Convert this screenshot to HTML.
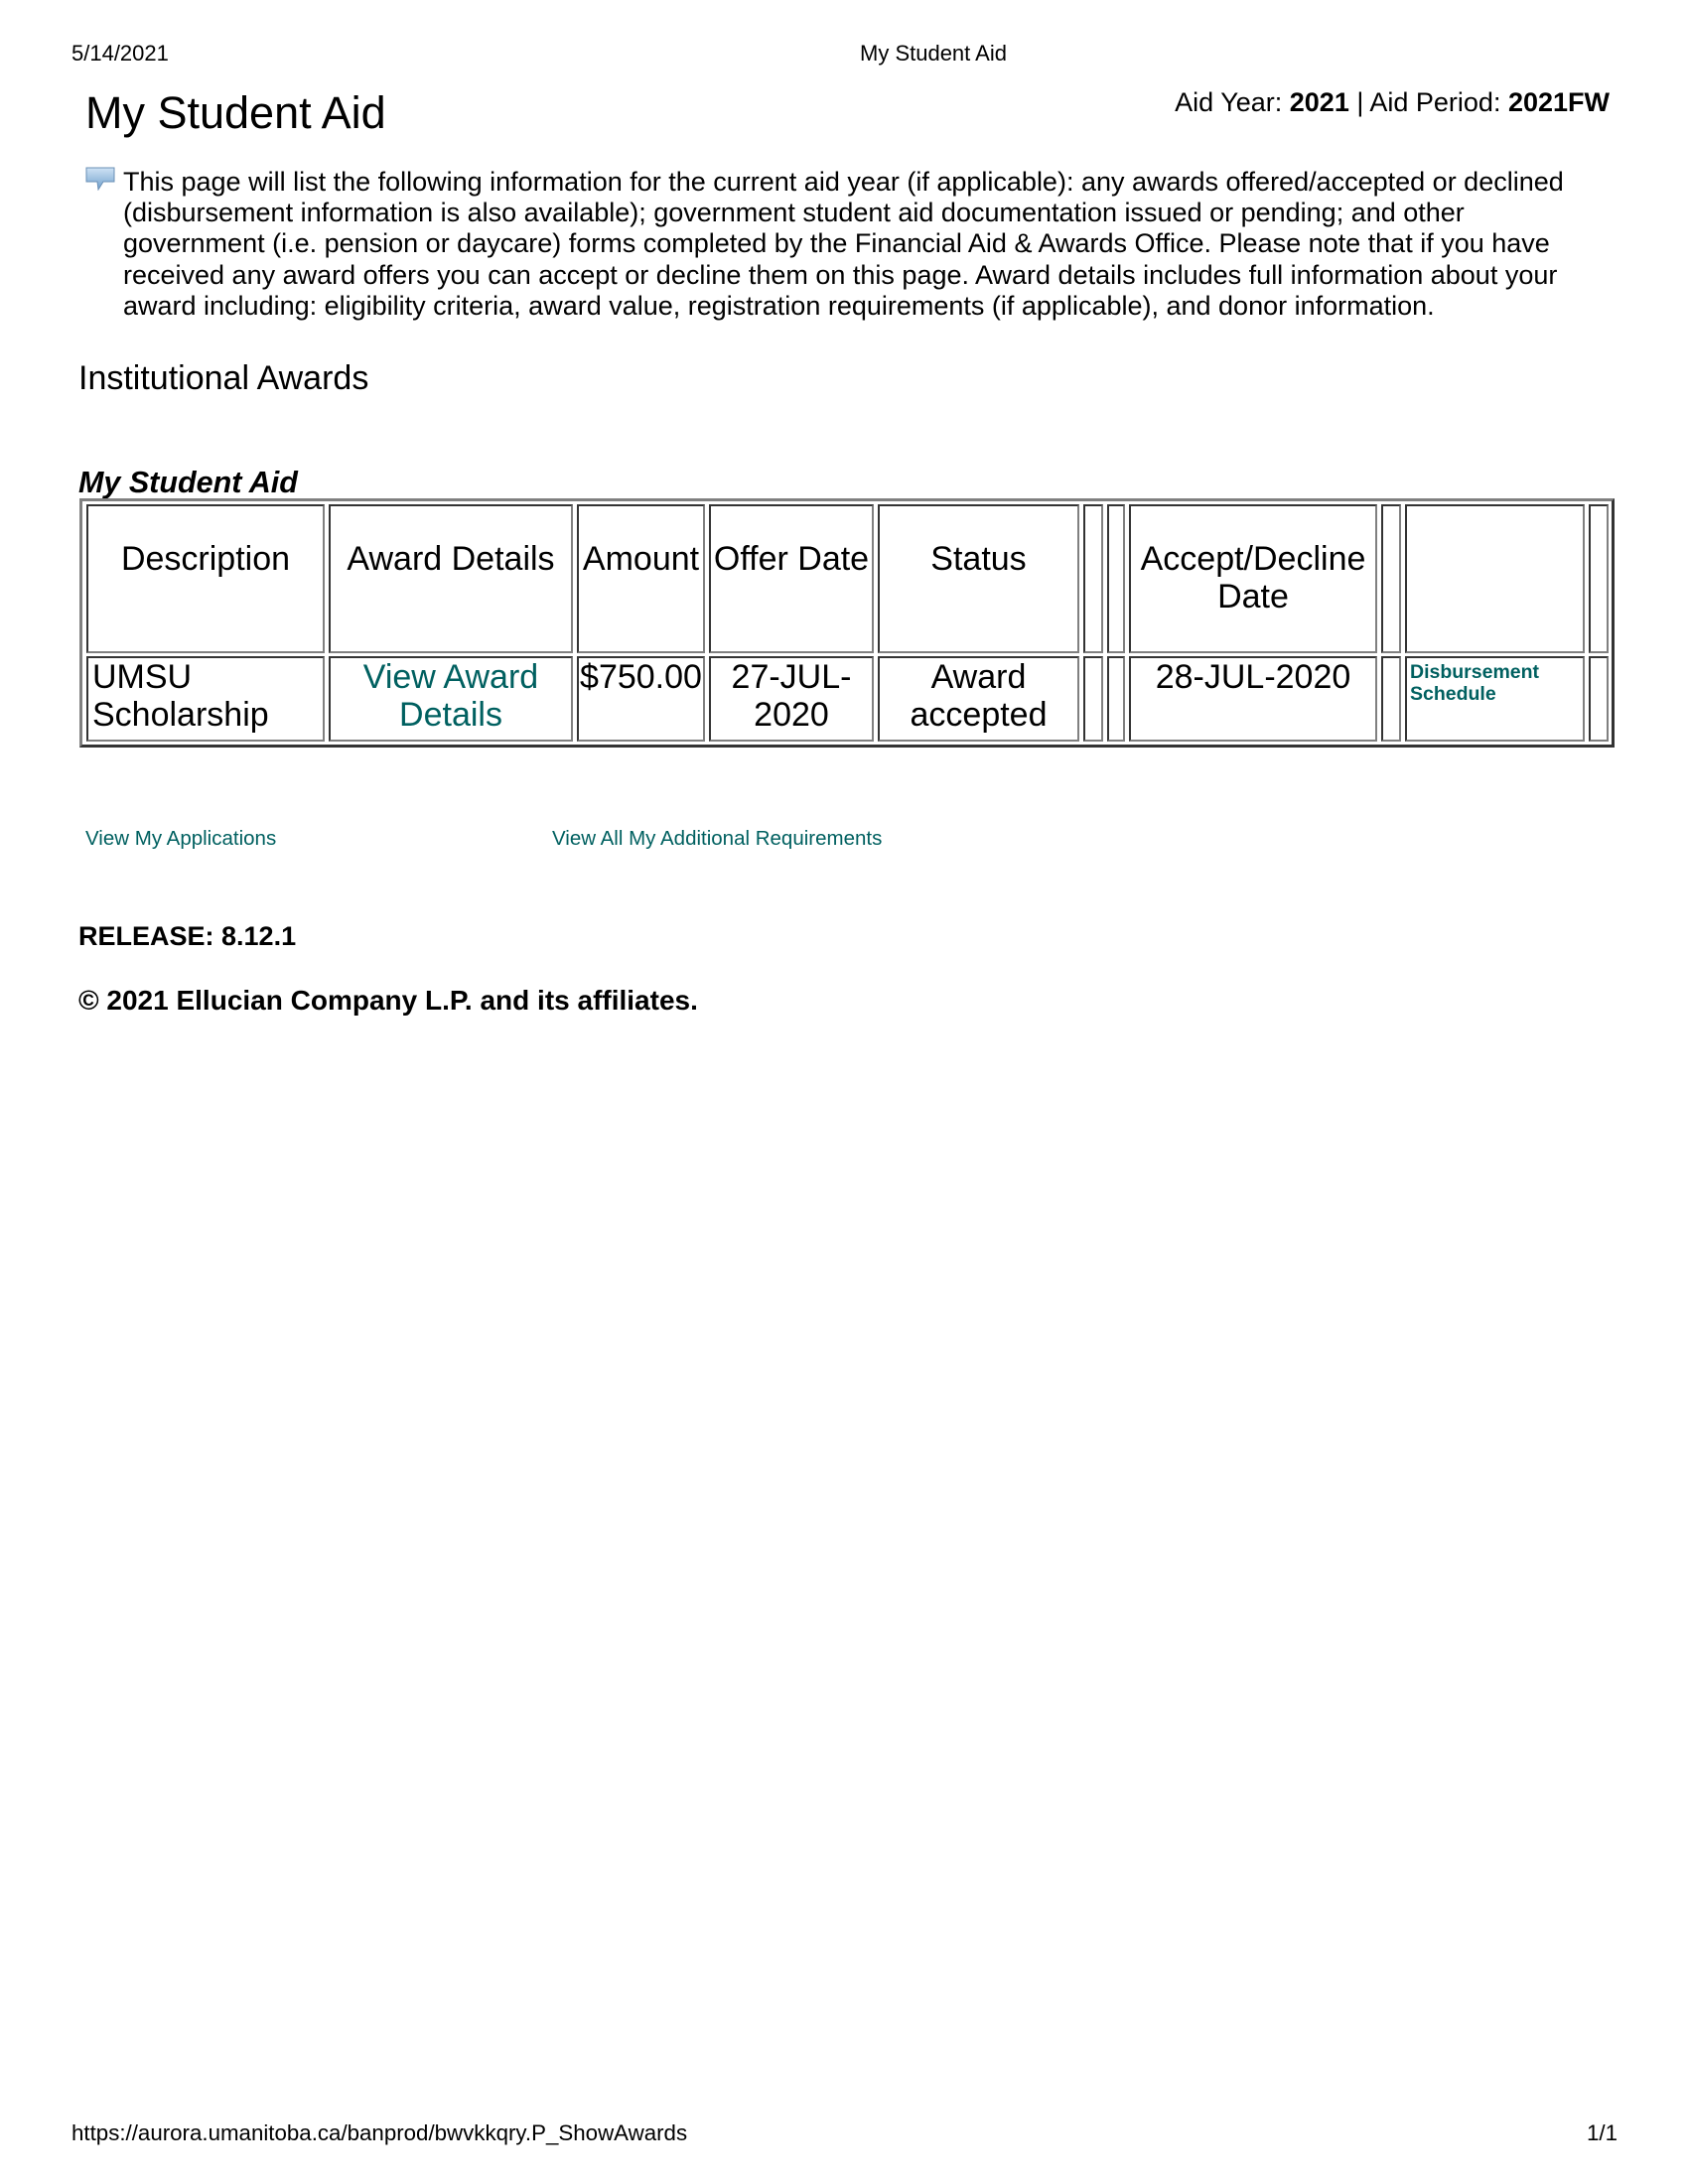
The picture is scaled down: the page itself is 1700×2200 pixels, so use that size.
<!DOCTYPE html>
<html><head><meta charset="utf-8"><style>
body{margin:0;width:1700px;height:2200px;background:#fff;font-family:"Liberation Sans",Arial,sans-serif;color:#000;position:relative;overflow:hidden}
.a{position:absolute;white-space:nowrap}
.c{position:absolute;box-sizing:border-box;border:2px solid;border-color:#333 #808080 #808080 #333;font-size:34px;line-height:38px;text-align:center;padding-top:8px}
.l{color:#006060}
</style></head><body>
<div class="a" style="left:72px;top:41px;font-size:22px">5/14/2021</div>
<div class="a" style="left:866px;top:41px;font-size:22px">My Student Aid</div>
<div class="a" style="left:86px;top:88px;font-size:45px">My Student Aid</div>
<div class="a" style="right:79px;top:88px;font-size:27px">Aid Year: <b>2021</b> | Aid Period: <b>2021FW</b></div>
<svg class="a" style="left:86px;top:168px" width="30" height="24" viewBox="0 0 30 24"><defs><linearGradient id="g" x1="0" y1="0" x2="0" y2="1"><stop offset="0" stop-color="#cfe3f5"/><stop offset="1" stop-color="#6f9fcc"/></linearGradient></defs><path d="M1 1H29V15H18L13 23L12 15H1Z" fill="url(#g)" stroke="#6a8fb5" stroke-width="1"/></svg>
<div class="a" style="left:124px;top:168px;font-size:27px;line-height:31.2px">This page will list the following information for the current aid year (if applicable): any awards offered/accepted or declined<br>(disbursement information is also available); government student aid documentation issued or pending; and other<br>government (i.e. pension or daycare) forms completed by the Financial Aid &amp; Awards Office. Please note that if you have<br>received any award offers you can accept or decline them on this page. Award details includes full information about your<br>award including: eligibility criteria, award value, registration requirements (if applicable), and donor information.</div>
<div class="a" style="left:79px;top:362px;font-size:34px">Institutional Awards</div>
<div class="a" style="left:79px;top:469px;font-size:30.5px;font-weight:bold;font-style:italic">My Student Aid</div>
<div class="a" style="left:80px;top:502px;width:1546px;height:251px;box-sizing:border-box;border:3px solid;border-color:#808080 #333 #333 #808080"></div>
<div class="c" style="left:87px;top:508px;width:240px;height:150px;padding-top:34px">Description</div>
<div class="c" style="left:331px;top:508px;width:246px;height:150px;padding-top:34px">Award Details</div>
<div class="c" style="left:581px;top:508px;width:129px;height:150px;padding-top:34px">Amount</div>
<div class="c" style="left:714px;top:508px;width:166px;height:150px;padding-top:34px">Offer Date</div>
<div class="c" style="left:884px;top:508px;width:203px;height:150px;padding-top:34px">Status</div>
<div class="c" style="left:1091px;top:508px;width:20px;height:150px"></div>
<div class="c" style="left:1115px;top:508px;width:18px;height:150px"></div>
<div class="c" style="left:1137px;top:508px;width:250px;height:150px;padding-top:34px">Accept/Decline<br>Date</div>
<div class="c" style="left:1391px;top:508px;width:20px;height:150px"></div>
<div class="c" style="left:1415px;top:508px;width:181px;height:150px"></div>
<div class="c" style="left:1600px;top:508px;width:20px;height:150px"></div>
<div class="c" style="left:87px;top:661px;width:240px;height:86px;text-align:left;padding:0 0 0 4px">UMSU<br>Scholarship</div>
<div class="c l" style="left:331px;top:661px;width:246px;height:86px;padding-top:0">View Award<br>Details</div>
<div class="c" style="left:581px;top:661px;width:129px;height:86px;padding-top:0">$750.00</div>
<div class="c" style="left:714px;top:661px;width:166px;height:86px;padding-top:0">27-JUL-<br>2020</div>
<div class="c" style="left:884px;top:661px;width:203px;height:86px;padding-top:0">Award<br>accepted</div>
<div class="c" style="left:1091px;top:661px;width:20px;height:86px"></div>
<div class="c" style="left:1115px;top:661px;width:18px;height:86px"></div>
<div class="c" style="left:1137px;top:661px;width:250px;height:86px;padding-top:0">28-JUL-2020</div>
<div class="c" style="left:1391px;top:661px;width:20px;height:86px"></div>
<div class="c l" style="left:1415px;top:661px;width:181px;height:86px;text-align:left;font-size:19.5px;line-height:22px;font-weight:bold;padding:3px 0 0 3px">Disbursement<br>Schedule</div>
<div class="c" style="left:1600px;top:661px;width:20px;height:86px"></div>
<div class="a l" style="left:86px;top:833px;font-size:20.5px">View My Applications</div>
<div class="a l" style="left:556px;top:833px;font-size:20.5px">View All My Additional Requirements</div>
<div class="a" style="left:79px;top:928px;font-size:27px;font-weight:bold">RELEASE: 8.12.1</div>
<div class="a" style="left:79px;top:992px;font-size:28px;font-weight:bold">© 2021 Ellucian Company L.P. and its affiliates.</div>
<div class="a" style="left:72px;top:2136px;font-size:22.3px">https://aurora.umanitoba.ca/banprod/bwvkkqry.P_ShowAwards</div>
<div class="a" style="right:71px;top:2136px;font-size:22.3px">1/1</div>
</body></html>
